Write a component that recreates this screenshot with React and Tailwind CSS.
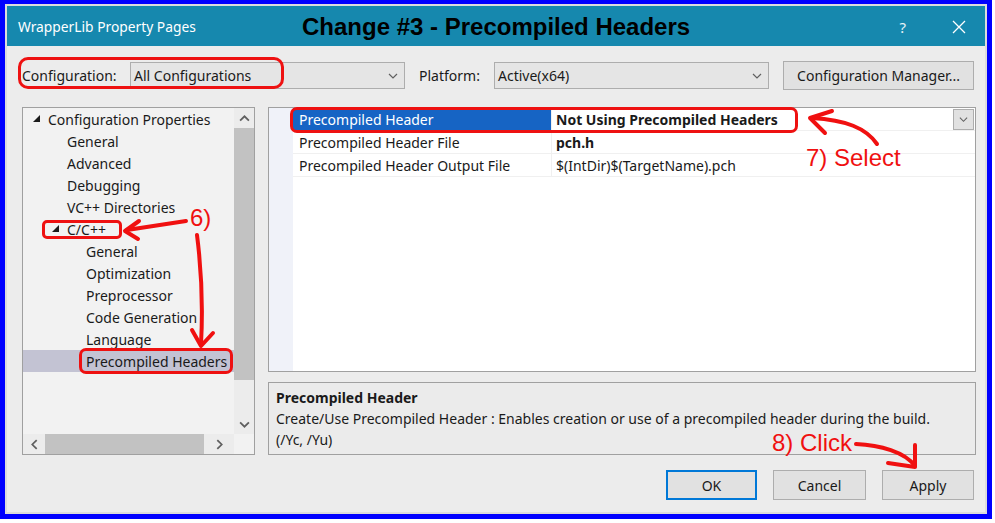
import React from "react";

const Chevron = ({ dir = "down", size = 10, color = "#606060", sw = 1.2 }) => {
  const pts = {
    down: "1,3 5,7 9,3",
    up: "1,7 5,3 9,7",
    left: "7,1 3,5 7,9",
    right: "3,1 7,5 3,9",
  }[dir];
  return (
    <svg width={size} height={size} viewBox="0 0 10 10">
      <polyline points={pts} fill="none" stroke={color} strokeWidth={sw} />
    </svg>
  );
};

const Tri = () => (
  <svg width="8" height="8" viewBox="0 0 8 8">
    <polygon points="7,0 7,7 0,7" fill="#1a1a1a" />
  </svg>
);

const tree = [
  { t: "Configuration Properties", l: 0, tri: true },
  { t: "General", l: 1 },
  { t: "Advanced", l: 1 },
  { t: "Debugging", l: 1 },
  { t: "VC++ Directories", l: 1 },
  { t: "C/C++", l: 1, tri: true },
  { t: "General", l: 2 },
  { t: "Optimization", l: 2 },
  { t: "Preprocessor", l: 2 },
  { t: "Code Generation", l: 2 },
  { t: "Language", l: 2 },
  { t: "Precompiled Headers", l: 2, sel: true },
];

const padFor = ["pl-[25px]", "pl-[44px]", "pl-[63px]"];

export default function App() {
  return (
    <div className="w-[995px] h-[523px] bg-white relative overflow-hidden font-['Noto_Sans',sans-serif] text-[14px] text-[#1a1a1a]">
      <div className="w-[992px] h-[519px] border-[#0000ff] border-l-[5px] border-t-[4px] border-r-[5px] border-b-[5px] flex">
        <div className="flex-1 border-2 border-[#dcdcdc] flex flex-col bg-[#ececec]">
          {/* Title bar */}
          <div className="h-[40px] bg-[#1688ae] flex items-center relative shrink-0 pt-[2px]">
            <span className="pl-[11px] text-white text-[13.8px]">WrapperLib Property Pages</span>
            <span className="absolute left-[295px] top-[6px] font-['Liberation_Sans',sans-serif] font-bold text-[24px] text-black leading-[30px]">
              Change #3 - Precompiled Headers
            </span>
            <span className="ml-auto text-white/90 text-[15px] mr-[46px]">?</span>
            <svg width="14" height="14" viewBox="0 0 14 14" className="mr-[19px]">
              <path d="M1 1 L13 13 M13 1 L1 13" stroke="white" strokeWidth="1.3" />
            </svg>
          </div>

          {/* Config row */}
          <div className="flex items-center pl-[15px] pr-[10px] mt-[15px] h-[29px]">
            <span className="w-[108px]">Configuration:</span>
            <div className="w-[275px] h-[27px] bg-[#e5e5e5] border border-[#adadad] flex items-center pl-[3px] pr-[6px]">
              <span>All Configurations</span>
              <span className="ml-auto"><Chevron /></span>
            </div>
            <span className="ml-[14px] w-[75px]">Platform:</span>
            <div className="w-[275px] h-[27px] bg-[#e5e5e5] border border-[#adadad] flex items-center pl-[3px] pr-[6px]">
              <span>Active(x64)</span>
              <span className="ml-auto"><Chevron /></span>
            </div>
            <div className="ml-[14px] w-[191px] h-[29px] bg-[#e1e1e1] border border-[#adadad] flex items-center justify-center">
              Configuration Manager...
            </div>
          </div>

          {/* Main */}
          <div className="flex pl-[15px] mt-[17px] h-[348px]">
            {/* Tree */}
            <div className="w-[233px] h-[348px] border border-[#a0a0a0] bg-[#f2f2f2] flex flex-col">
              <div className="flex flex-1">
                <div className="flex-1 flex flex-col">
                  {tree.map((it, i) => (
                    <div
                      key={i}
                      className={`h-[22px] flex items-center relative ${padFor[it.l]} ${it.sel ? "bg-[#c3c3d3]" : ""}`}
                    >
                      {it.tri && (
                        <span className={`absolute top-[7px] ${it.l === 0 ? "left-[10px]" : "left-[29px]"}`}>
                          <Tri />
                        </span>
                      )}
                      <span className="whitespace-nowrap">{it.t}</span>
                    </div>
                  ))}
                </div>
                <div className="w-[20px] flex flex-col bg-[#ececec]">
                  <div className="h-[20px] flex items-center justify-center"><Chevron dir="up" size={11} sw={1.6} /></div>
                  <div className="h-[252px] bg-[#c2c2c2]" />
                  <div className="flex-1" />
                  <div className="h-[20px] flex items-center justify-center"><Chevron dir="down" size={11} sw={1.6} /></div>
                </div>
              </div>
              <div className="h-[20px] flex shrink-0">
                <div className="flex-1 flex items-center bg-[#ececec]">
                  <div className="w-[22px] flex justify-center"><Chevron dir="left" size={11} sw={1.6} /></div>
                  <div className="w-[159px] h-[20px] bg-[#c2c2c2]" />
                  <div className="flex-1 flex justify-center"><Chevron dir="right" size={11} sw={1.6} /></div>
                </div>
                <div className="w-[20px] bg-[#f2f2f2]" />
              </div>
            </div>

            {/* Right column */}
            <div className="ml-[13px] w-[708px] flex flex-col">
              <div className="h-[265px] border border-[#a0a0a0] bg-white flex">
                <div className="w-[24px] bg-[#f0f2f9]" />
                <div className="flex-1 flex flex-col">
                  <div className="h-[23px] flex border-b border-[#f0f0f0]">
                    <div className="w-[258px] bg-[#1664c4] text-white pl-[6px] flex items-center">Precompiled Header</div>
                    <div className="flex-1 flex items-center pl-[4px] font-bold border-l border-[#f0f0f0]">
                      Not Using Precompiled Headers
                      <div className="ml-auto mr-[1px] w-[21px] h-[21px] bg-[#e1e1e1] border border-[#adadad] flex items-center justify-center">
                        <Chevron size={9} />
                      </div>
                    </div>
                  </div>
                  <div className="h-[23px] flex border-b border-[#f0f0f0]">
                    <div className="w-[258px] pl-[6px] flex items-center">Precompiled Header File</div>
                    <div className="flex-1 flex items-center pl-[4px] font-bold border-l border-[#f0f0f0]">pch.h</div>
                  </div>
                  <div className="h-[23px] flex border-b border-[#f0f0f0]">
                    <div className="w-[258px] pl-[6px] flex items-center">Precompiled Header Output File</div>
                    <div className="flex-1 flex items-center pl-[4px] border-l border-[#f0f0f0]">$(IntDir)$(TargetName).pch</div>
                  </div>
                </div>
              </div>
              <div className="mt-[10px] h-[73px] border border-[#a0a0a0] bg-[#ebebeb] pl-[7px] pt-[4px] leading-[21px]">
                <div className="font-bold">Precompiled Header</div>
                <div>Create/Use Precompiled Header : Enables creation or use of a precompiled header during the build.</div>
                <div>(/Yc, /Yu)</div>
              </div>
            </div>
          </div>

          {/* Buttons */}
          <div className="flex justify-end pr-[11px] mt-[15px] gap-[16px]">
            <div className="w-[91px] h-[30px] bg-[#e1e1e1] border-2 border-[#0078d7] flex items-center justify-center">OK</div>
            <div className="w-[93px] h-[30px] bg-[#e1e1e1] border border-[#adadad] flex items-center justify-center">Cancel</div>
            <div className="w-[92px] h-[30px] bg-[#e1e1e1] border border-[#adadad] flex items-center justify-center">Apply</div>
          </div>
        </div>
      </div>

      {/* Annotations */}
      <div className="absolute left-[18px] top-[57px] w-[266px] h-[32px] border-[3px] border-[#ee1111] rounded-[10px]" />
      <div className="absolute left-[42px] top-[220px] w-[80px] h-[19px] border-[3px] border-[#ee1111] rounded-[5px]" />
      <div className="absolute left-[79px] top-[348px] w-[154px] h-[26px] border-[3px] border-[#ee1111] rounded-[7px]" />
      <div className="absolute left-[290px] top-[107px] w-[508px] h-[26px] border-[3px] border-[#ee1111] rounded-[7px]" />

      <span className="absolute left-[190px] top-[204px] font-['Liberation_Sans',sans-serif] text-[24px] leading-[28px] text-[#f01010]">6)</span>
      <span className="absolute left-[806px] top-[144px] font-['Liberation_Sans',sans-serif] text-[24px] leading-[28px] text-[#f01010]">7) Select</span>
      <span className="absolute left-[772px] top-[429px] font-['Liberation_Sans',sans-serif] text-[24px] leading-[28px] text-[#f01010]">8) Click</span>

      <svg className="absolute left-0 top-0 pointer-events-none" width="995" height="523" viewBox="0 0 995 523">
        <g fill="none" stroke="#f01010" strokeWidth="4" strokeLinecap="round" strokeLinejoin="round">
          <path d="M186 221 L127 230" />
          <path d="M139 221 L125 231 L138 239" />
          <path d="M197 235 Q204 290 201 344" />
          <path d="M192 330 L201 346 L213 333" />
          <path d="M877 144 C866 128 846 120 812 118" />
          <path d="M832 111 L810 118 L825 133" />
          <path d="M856 444 C880 445 905 452 915 466" />
          <path d="M915 445 L915 467 L888 463" />
        </g>
      </svg>
    </div>
  );
}
